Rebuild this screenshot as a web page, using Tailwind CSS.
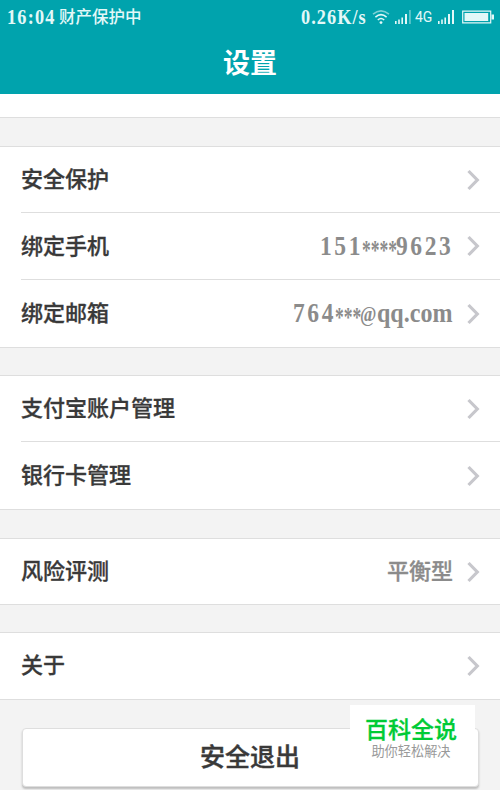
<!DOCTYPE html>
<html lang="zh-CN">
<head>
<meta charset="utf-8">
<title>设置</title>
<script src="https://cdn.jsdelivr.net/npm/@tailwindcss/browser@4"></script>
</head>
<body class="h-[790px] w-[500px] overflow-hidden bg-[#f3f3f3] font-['Noto_Sans_CJK_SC',sans-serif] text-[#393939]">
<svg class="hidden"><symbol id="chev" viewBox="0 0 14 22"><path d="M1.5 2L10.3 11L1.5 20" fill="none" stroke="#c7c7cc" stroke-width="3.2"/></symbol></svg>
<header class="h-[94px] bg-[#00a3ad] text-white">
  <div class="flex h-[34px] items-center pl-[7px] pr-[6px] text-[#e3f8f8]">
    <span class="w-[46px] origin-left scale-x-[0.87] whitespace-nowrap font-['Liberation_Serif',serif] text-[21px] font-bold leading-none tracking-[1.4px]">16:04</span>
    <span class="ml-[6px] pb-[2px] text-[16.5px] font-medium leading-none">财产保护中</span>
    <span class="ml-auto w-[66px] origin-left scale-x-[0.87] whitespace-nowrap font-['Liberation_Serif',serif] text-[21px] font-bold leading-none tracking-[1.2px]">0.26K/s</span>
    <svg class="ml-[5px] h-[16px] w-[18px]" viewBox="0 0 18 16" fill="none" stroke="currentColor" stroke-width="1.5"><path d="M1 5.2Q9-1.4 17 5.2" opacity=".55"/><path d="M3.4 8.1Q9 3.2 14.6 8.1M5.8 11Q9 8 12.2 11"/><circle cx="9" cy="13.6" r="1.4" fill="currentColor" stroke="none"/></svg>
    <svg class="ml-[5px] h-[15px] w-[17px]" viewBox="0 0 17 15" fill="currentColor"><path d="M0 11h1.6v3H0zM3.2 9.5h1.6V14H3.2zM6.4 7.5H8V14H6.4zM10 4h2v10h-2z"/><path opacity=".5" d="M14.2 0h1.5v14h-1.5z"/></svg>
    <span class="ml-[3px] w-[18px] font-['Roboto',sans-serif] text-[14px] leading-none">4G</span>
    <svg class="ml-[5px] h-[15px] w-[17px]" viewBox="0 0 17 15" fill="currentColor"><path d="M0 11h1.6v3H0zM3.2 9.5h1.6V14H3.2zM6.4 7.5H8V14H6.4zM10 4h2v10h-2zM14 0h2v14h-2z"/></svg>
    <svg class="ml-[7px] h-[14px] w-[32px]" viewBox="0 0 32 14" fill="currentColor"><path d="M.7 1.2h28v11.6H.7z" fill="none" stroke="currentColor" stroke-width="1.2"/><path d="M2.5 3h23.7v8H2.5zM29.5 4.5H32v5h-2.5z"/></svg>
  </div>
  <h1 class="pt-[13px] text-center text-[27px] font-bold leading-[30px]">设置</h1>
</header>
<div class="h-[24px] border-b border-[#dedede] bg-white"></div>
<main class="[-webkit-text-stroke:0.3px]">
  <section class="mt-[28px] border-y border-[#dedede] bg-white pl-[21px]">
    <div class="flex h-[66px] items-center border-b border-[#dedede] pr-[19px]"><span class="pb-[5px] text-[22px] font-medium leading-none">安全保护</span><svg class="ml-auto h-[22px] w-[14px]"><use href="#chev"/></svg></div>
    <div class="flex h-[67px] items-center border-b border-[#dedede] pr-[19px]"><span class="pb-[4px] text-[22px] font-medium leading-none">绑定手机</span>
      <span class="ml-auto mr-[14px] flex items-center whitespace-nowrap font-['Liberation_Serif',serif] text-[27px] font-bold leading-none text-[#8b8b8b] [-webkit-text-stroke:0px]"><span class="w-[42px] origin-left scale-x-[0.87] tracking-[3px]">151</span><span class="w-[34px] origin-left translate-y-[4px] scale-x-[0.65]">****</span><span class="w-[57px] origin-left scale-x-[0.87] tracking-[3px]">9623</span></span>
      <svg class="h-[22px] w-[14px]"><use href="#chev"/></svg></div>
    <div class="flex h-[67px] items-center pr-[19px]"><span class="pb-[5px] text-[22px] font-medium leading-none">绑定邮箱</span>
      <span class="ml-auto mr-[14px] flex items-center whitespace-nowrap font-['Liberation_Serif',serif] text-[27px] font-bold leading-none text-[#8b8b8b] [-webkit-text-stroke:0px]"><span class="w-[42px] origin-left scale-x-[0.87] tracking-[3px]">764</span><span class="w-[25px] origin-left translate-y-[4px] scale-x-[0.65]">***</span><span class="w-[17px] origin-left scale-x-[0.8] text-[22px]">@</span><span class="w-[76px] origin-left scale-x-[0.89]">qq.com</span></span>
      <svg class="h-[22px] w-[14px]"><use href="#chev"/></svg></div>
  </section>
  <section class="mt-[27px] border-y border-[#dedede] bg-white pl-[21px]">
    <div class="flex h-[66px] items-center border-b border-[#dedede] pr-[19px]"><span class="pb-[5px] text-[22px] font-medium leading-none">支付宝账户管理</span><svg class="ml-auto h-[22px] w-[14px]"><use href="#chev"/></svg></div>
    <div class="flex h-[67px] items-center pr-[19px]"><span class="pb-[5px] text-[22px] font-medium leading-none">银行卡管理</span><svg class="ml-auto h-[22px] w-[14px]"><use href="#chev"/></svg></div>
  </section>
  <section class="mt-[28px] border-y border-[#dedede] bg-white pl-[21px]">
    <div class="flex h-[65px] items-center pr-[19px]"><span class="pb-[6px] text-[22px] font-medium leading-none">风险评测</span><span class="ml-auto mr-[14px] pb-[6px] text-[22px] font-medium leading-none text-[#8b8b8b]">平衡型</span><svg class="h-[22px] w-[14px]"><use href="#chev"/></svg></div>
  </section>
  <section class="mt-[27px] border-y border-[#dedede] bg-white pl-[21px]">
    <div class="flex h-[66px] items-center pr-[19px]"><span class="pb-[6px] text-[22px] font-medium leading-none">关于</span><svg class="ml-auto h-[22px] w-[14px]"><use href="#chev"/></svg></div>
  </section>
  <button class="mx-auto mt-[28px] block h-[59px] w-[457px] rounded-[4px] border border-[#dedede] bg-white pb-[5px] text-[25px] font-medium leading-none shadow-[0_2px_2px_#bdbdbd] [-webkit-text-stroke:0.4px]">安全退出</button>
</main>
<aside class="absolute left-[350px] top-[705px] h-[56px] w-[125px] bg-white pr-[3px] pt-[10px] text-center">
  <div class="text-[23px] font-medium leading-[26px] text-[#00cb36] [-webkit-text-stroke:0.3px]">百科全说</div>
  <div class="pt-[2px] text-[13.2px] leading-[16px] text-[#999]">助你轻松解决</div>
</aside>
</body>
</html>
